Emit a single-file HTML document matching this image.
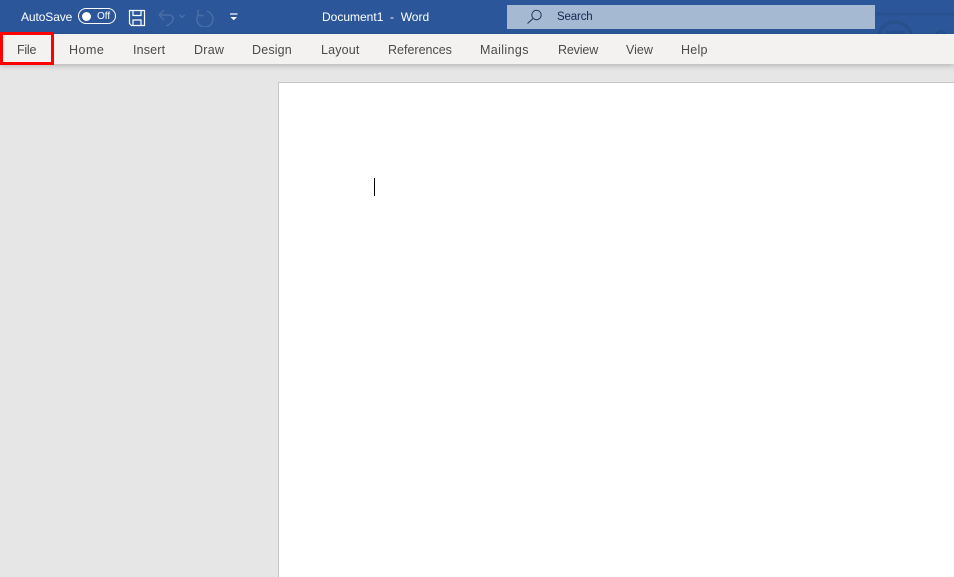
<!DOCTYPE html>
<html>
<head>
<meta charset="utf-8">
<style>
html,body{margin:0;padding:0;width:954px;height:577px;overflow:hidden;background:#e6e6e6;font-family:"Liberation Sans",sans-serif;}
.a{position:absolute;white-space:nowrap;}
.tab{position:absolute;top:42.500px;font-size:12.500px;line-height:15px;color:#4a4a4a;white-space:nowrap;}
</style>
</head>
<body>
<div class="a" style="left:0;top:0;width:954px;height:34px;background:#2b579a;"></div>
<svg class="a" style="left:860px;top:0" width="94" height="34" viewBox="0 0 94 34" fill="none" stroke="#27508d" stroke-width="3">
<path d="M15 14H94"/><circle cx="35" cy="39" r="17" stroke-width="3.500"/><path d="M25 32h20"/><circle cx="81" cy="35" r="4"/>
</svg>
<div class="a" style="left:21px;top:10px;font-size:12px;letter-spacing:-.1px;line-height:15px;color:#fff;">AutoSave</div>
<div class="a" style="left:78px;top:8px;width:36px;height:14px;border:1.300px solid #fff;border-radius:8px;"></div>
<div class="a" style="left:82px;top:11.500px;width:9px;height:9px;border-radius:50%;background:#fff;"></div>
<div class="a" style="left:97px;top:10.500px;font-size:10px;line-height:12px;color:#fff;">Off</div>
<svg class="a" style="left:128px;top:9px" width="18" height="19" viewBox="0 0 18 19" fill="none" stroke="#fff" stroke-width="1.200">
<path d="M1.500 1.500H16.500V16.500H3.500L1.500 14.500Z"/><path d="M5 1.500V6.500H13V1.500"/><path d="M5 16.500V11H13V16.500"/>
</svg>
<svg class="a" style="left:158px;top:8px" width="70" height="19" viewBox="0 0 70 19" fill="none" stroke="#4a6fa8" stroke-width="1.400">
<path d="M1 7L6 2M1 7L6 12M1 7H10C17 7 17.500 14 8 18"/>
<path d="M21.500 7L24 9.500 26.500 7"/>
<path d="M49 3.300A8 8 0 1 1 40 7"/>
<path d="M40 2V7.500H45.500"/>
</svg>
<svg class="a" style="left:229px;top:13px" width="11" height="9" viewBox="0 0 11 9">
<path d="M1 1H8.500" stroke="#fff" stroke-width="1.200" fill="none"/><path d="M1.500 4H8L4.750 7.200Z" fill="#fff"/>
</svg>
<div class="a" style="left:322px;top:9.500px;font-size:12px;line-height:15px;color:#fff;">Document1&nbsp; - &nbsp;Word</div>
<div class="a" style="left:507px;top:5px;width:368px;height:24px;background:#a5b9d2;"></div>
<svg class="a" style="left:526px;top:8px" width="17" height="17" viewBox="0 0 17 17" fill="none" stroke="#1d3557" stroke-width="1">
<circle cx="10.500" cy="7" r="4.700"/><path d="M7 10.500L1.500 15.500"/>
</svg>
<div class="a" style="left:557px;top:9.500px;font-size:11.500px;letter-spacing:-.15px;line-height:15px;color:#12294f;">Search</div>
<div class="a" style="left:0;top:34px;width:954px;height:30px;background:#f3f2f1;box-shadow:0 2px 5px rgba(0,0,0,.2);"></div>
<div class="a" style="left:0;top:32px;width:54px;height:33px;box-sizing:border-box;border:3.500px solid #fe0000;"></div>
<div class="tab" style="left:17px;letter-spacing:-.25px;">File</div>
<div class="tab" style="left:69px;letter-spacing:.5px;">Home</div>
<div class="tab" style="left:133px;letter-spacing:.17px;">Insert</div>
<div class="tab" style="left:194px;letter-spacing:.25px;">Draw</div>
<div class="tab" style="left:252px;letter-spacing:.17px;">Design</div>
<div class="tab" style="left:321px;letter-spacing:.17px;">Layout</div>
<div class="tab" style="left:388px;">References</div>
<div class="tab" style="left:480px;letter-spacing:.37px;">Mailings</div>
<div class="tab" style="left:558px;letter-spacing:-.15px;">Review</div>
<div class="tab" style="left:626px;">View</div>
<div class="tab" style="left:681px;letter-spacing:.25px;">Help</div>
<div class="a" style="left:278px;top:82px;width:676px;height:495px;box-sizing:border-box;background:#fff;border-left:1px solid #c6c6c6;border-top:1px solid #c6c6c6;"></div>
<div class="a" style="left:374px;top:178px;width:1px;height:18px;background:#000;"></div>
</body>
</html>
